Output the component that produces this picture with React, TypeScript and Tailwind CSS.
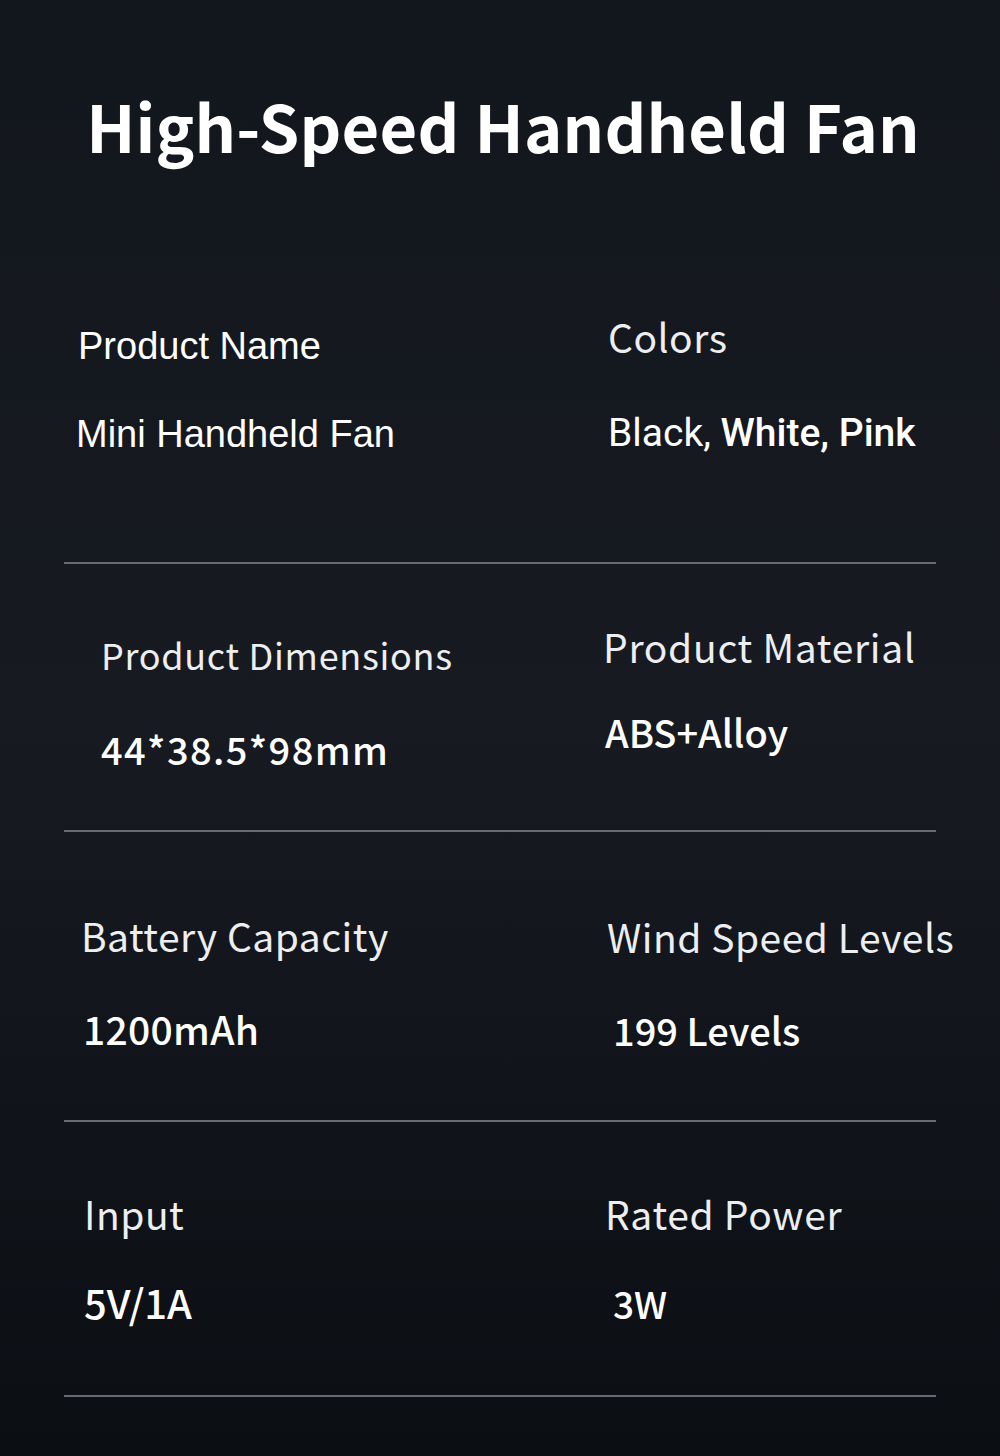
import React from "react";

const CJK = "font-['Noto_Sans_CJK_SC','Noto_Sans',sans-serif]";

function Divider() {
    return <div className="mx-[64px] h-[2px] bg-[#686b71]" />;
}

export default function App() {
    return (
        <div className={`w-[1000px] h-[1456px] bg-linear-to-b from-[#12161d] via-[#171a21] to-[#0b0e13] text-white ${CJK}`}>
            <h1 className="pt-[93px] pl-[6px] text-center text-[65px] font-bold leading-none tracking-[0.2px]">
                High-Speed Handheld Fan
            </h1>

            {/* row 1 */}
            <div className="grid grid-cols-[600px_1fr] h-[404px]">
                <div>
                    <p className="mt-[169px] pl-[78px] font-['Liberation_Sans',Arial,sans-serif] text-[38px] leading-none">
                        Product Name
                    </p>
                    <p className="mt-[50px] pl-[76px] font-['Liberation_Sans',Arial,sans-serif] text-[38px] leading-none">
                        Mini Handheld Fan
                    </p>
                </div>
                <div>
                    <p className="mt-[159px] pl-[8px] text-[39px] leading-none tracking-[0.5px] text-[#eceef0]">Colors</p>
                    <p className="mt-[58px] pl-[8px] font-['Roboto',sans-serif] text-[39px] leading-none">
                        Black, <span className="font-medium">White, Pink</span>
                    </p>
                </div>
            </div>
            <Divider />

            {/* row 2 */}
            <div className="grid grid-cols-[600px_1fr] h-[266px]">
                <div>
                    <p className="mt-[72px] pl-[101px] text-[36px] leading-none tracking-[0.7px] text-[#eceef0]">Product Dimensions</p>
                    <p className="mt-[58px] pl-[101px] text-[38px] font-medium leading-none tracking-[1.4px]">44*38.5*98mm</p>
                </div>
                <div>
                    <p className="mt-[63px] pl-[3px] text-[39px] leading-none tracking-[0.7px] text-[#eceef0]">Product Material</p>
                    <p className="mt-[47px] pl-[5px] text-[38px] font-medium leading-none">ABS+Alloy</p>
                </div>
            </div>
            <Divider />

            {/* row 3 */}
            <div className="grid grid-cols-[600px_1fr] h-[288px]">
                <div>
                    <p className="mt-[84px] pl-[81px] text-[39px] leading-none tracking-[0.5px] text-[#eceef0]">Battery Capacity</p>
                    <p className="mt-[54px] pl-[83px] text-[39px] font-medium leading-none tracking-[0.3px]">1200mAh</p>
                </div>
                <div>
                    <p className="mt-[85px] pl-[7px] text-[39px] leading-none tracking-[0.5px] text-[#eceef0]">Wind Speed Levels</p>
                    <p className="mt-[55px] pl-[13px] text-[38px] font-medium leading-none">199 Levels</p>
                </div>
            </div>
            <Divider />

            {/* row 4 */}
            <div className="grid grid-cols-[600px_1fr] h-[273px]">
                <div>
                    <p className="mt-[72px] pl-[84px] text-[39px] leading-none tracking-[0.5px] text-[#eceef0]">Input</p>
                    <p className="mt-[49px] pl-[84px] text-[40px] font-medium leading-none">5V/1A</p>
                </div>
                <div>
                    <p className="mt-[72px] pl-[5px] text-[39px] leading-none tracking-[0.7px] text-[#eceef0]">Rated Power</p>
                    <p className="mt-[52px] pl-[13px] text-[37px] font-medium leading-none">3W</p>
                </div>
            </div>
            <Divider />
        </div>
    );
}
